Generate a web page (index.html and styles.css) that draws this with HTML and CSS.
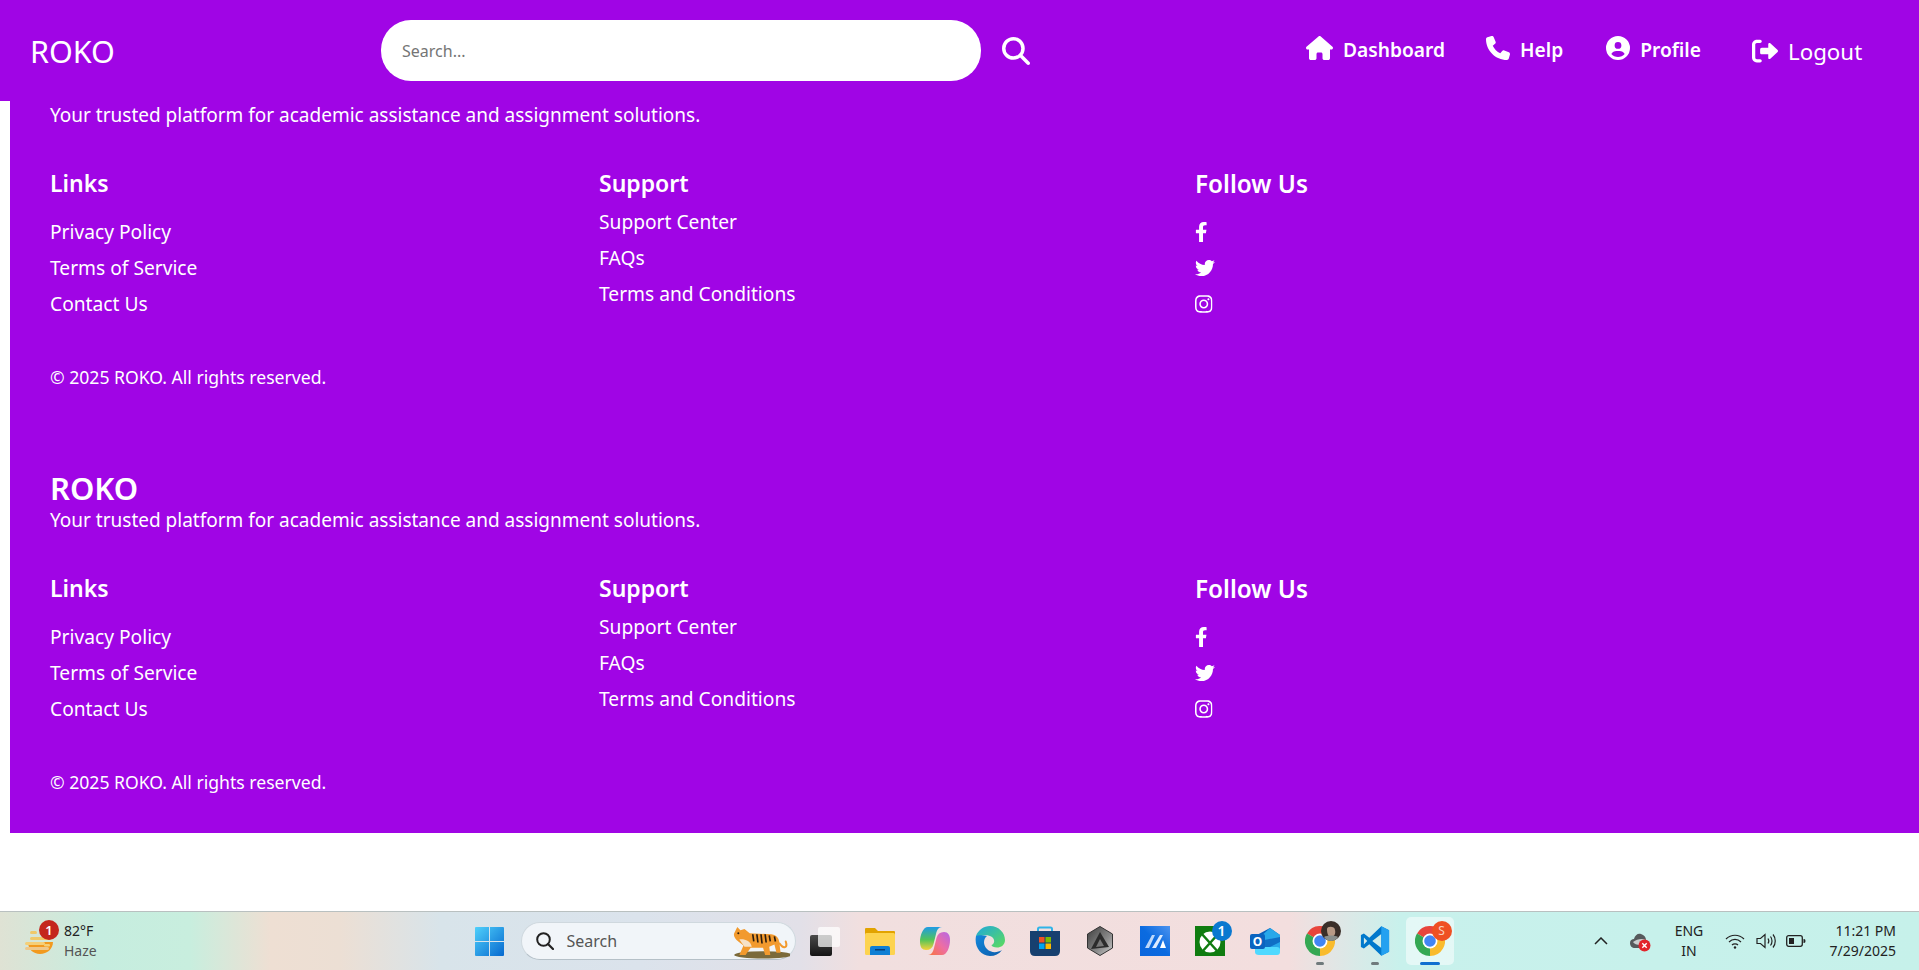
FILE: index.html
```html
<!DOCTYPE html>
<html lang="en">
<head>
    <meta charset="UTF-8">
    <meta name="viewport" content="width=device-width, initial-scale=1.0">
    <title>ROKO</title>
    <link rel="stylesheet" href="styles.css">
</head>
<body>
    <svg class="sprite">
        <symbol id="fb" viewBox="0 0 320 512"><path d="M279.140 288l14.220-92.660h-88.910v-60.130c0-25.350 12.420-50.060 52.240-50.060h40.420V6.260S260.430 0 225.360 0c-73.220 0-121.080 44.380-121.080 124.720v70.620H22.890V288h81.390v224h100.170V288z"/></symbol>
        <symbol id="tw" viewBox="0 0 512 512"><path d="M459.370 151.716c.325 4.548.325 9.097.325 13.645 0 138.720-105.583 298.558-298.558 298.558-59.452 0-114.680-17.219-161.137-47.106 8.447.974 16.568 1.299 25.340 1.299 49.055 0 94.213-16.568 130.274-44.832-46.132-.975-84.792-31.188-98.112-72.772 6.498.974 12.995 1.624 19.818 1.624 9.421 0 18.843-1.300 27.614-3.573-48.081-9.747-84.143-51.980-84.143-102.985v-1.299c13.969 7.797 30.214 12.670 47.431 13.319-28.264-18.843-46.781-51.005-46.781-87.391 0-19.492 5.197-37.360 14.294-52.954 51.655 63.675 129.300 105.258 216.365 109.807-1.624-7.797-2.599-15.918-2.599-24.040 0-57.828 46.782-104.934 104.934-104.934 30.213 0 57.502 12.670 76.670 33.137 23.715-4.548 46.456-13.320 66.599-25.340-7.798 24.366-24.366 44.833-46.132 57.827 21.117-2.273 41.584-8.122 60.426-16.243-14.292 20.791-32.161 39.308-52.628 54.253z"/></symbol>
        <symbol id="ig" viewBox="0 0 448 512"><path d="M224.100 141c-63.600 0-114.900 51.300-114.900 114.900s51.300 114.900 114.900 114.900S339 319.500 339 255.900 287.700 141 224.100 141zm0 189.600c-41.100 0-74.700-33.500-74.700-74.700s33.500-74.700 74.700-74.700 74.700 33.500 74.700 74.700-33.600 74.700-74.700 74.700zm146.400-194.300c0 14.900-12 26.800-26.800 26.800-14.900 0-26.800-12-26.800-26.800s12-26.800 26.800-26.800 26.800 12 26.800 26.800zm76.100 27.200c-1.700-35.900-9.900-67.700-36.200-93.900-26.200-26.200-58-34.400-93.900-36.200-37-2.100-147.900-2.100-184.900 0-35.800 1.700-67.600 9.900-93.900 36.100s-34.400 58-36.200 93.900c-2.100 37-2.100 147.900 0 184.900 1.700 35.900 9.900 67.700 36.200 93.900s58 34.400 93.900 36.200c37 2.100 147.900 2.100 184.900 0 35.900-1.700 67.700-9.900 93.900-36.200 26.200-26.200 34.400-58 36.200-93.900 2.100-37 2.100-147.800 0-184.800zM398.800 388c-7.800 19.600-22.900 34.700-42.600 42.600-29.500 11.700-99.500 9-132.100 9s-102.700 2.600-132.100-9c-19.600-7.800-34.700-22.900-42.600-42.600-11.700-29.500-9-99.500-9-132.100s-2.600-102.700 9-132.100c7.800-19.600 22.900-34.700 42.600-42.600 29.500-11.700 99.500-9 132.100-9s102.700-2.600 132.100 9c19.600 7.800 34.700 22.900 42.600 42.600 11.700 29.500 9 99.500 9 132.100s2.700 102.700-9 132.100z"/></symbol>
        <symbol id="chrome" viewBox="0 0 30 30">
            <path fill="#e8453c" d="M15 15L2 7.500A15 15 0 0 1 28 7.500Z"/>
            <path fill="#f9bb2d" d="M15 15L28 7.500A15 15 0 0 1 15 30Z"/>
            <path fill="#34a853" d="M15 15L15 30A15 15 0 0 1 2 7.500Z"/>
            <circle cx="15" cy="15" r="7.500" fill="#fff"/>
            <circle cx="15" cy="15" r="5.800" fill="#4285f4"/>
        </symbol>
    </svg>

    <div class="page">
        <header class="navbar">
            <a class="brand">ROKO</a>
            <form class="search">
                <input type="text" placeholder="Search...">
                <svg class="search_icon" viewBox="0 0 512 512"><path d="M416 208c0 45.900-14.900 88.300-40 122.700L502.600 457.400c12.500 12.500 12.500 32.800 0 45.300s-32.800 12.500-45.300 0L330.700 376c-34.400 25.200-76.800 40-122.700 40C93.100 416 0 322.900 0 208S93.100 0 208 0S416 93.100 416 208zM208 352a144 144 0 1 0 0-288 144 144 0 1 0 0 288z"/></svg>
            </form>
            <nav class="nav_links">
                <a><svg class="icon_home" viewBox="0 0 576 512"><path d="M575.800 255.500c0 18-15 32.100-32 32.100h-32l.7 160.200c0 2.700-.2 5.400-.5 8.100V472c0 22.100-17.900 40-40 40H456c-1.100 0-2.200 0-3.300-.1c-1.400 .1-2.800 .1-4.200 .1H416 392c-22.100 0-40-17.900-40-40V448 384c0-17.700-14.300-32-32-32H256c-17.700 0-32 14.300-32 32v64 24c0 22.100-17.900 40-40 40H160 128.100c-1.500 0-3-.1-4.500-.2c-1.200 .1-2.400 .2-3.600 .2H104c-22.100 0-40-17.900-40-40V360c0-.9 0-1.900 .1-2.800V287.600H32c-18 0-32-14-32-32.100c0-9 3-17 10-24L266.400 8c7-7 15-8 22-8s15 2 21 7L564.800 231.500c8 7 12 15 11 24z"/></svg><span>Dashboard</span></a>
                <a class="nav_help"><svg class="icon_round" viewBox="0 0 512 512"><path d="M164.900 24.600c-7.700-18.600-28-28.500-47.400-23.200l-88 24C12.100 30.200 0 46 0 64C0 311.400 200.600 512 448 512c18 0 33.800-12.100 38.600-29.500l24-88c5.300-19.400-4.600-39.700-23.200-47.400l-96-40c-16.300-6.800-35.200-2.100-46.300 11.600L304.700 368C234.300 334.700 177.300 277.700 144 207.300L193.300 167c13.700-11.200 18.400-30 11.600-46.300l-40-96z"/></svg><span>Help</span></a>
                <a><svg class="icon_round" viewBox="0 0 512 512"><path d="M399 384.200C376.900 345.800 335.400 320 288 320H224c-47.400 0-88.900 25.800-111 64.200c35.200 39.200 86.200 63.800 143 63.800s107.800-24.700 143-63.800zM0 256a256 256 0 1 1 512 0A256 256 0 1 1 0 256zm256 16a72 72 0 1 0 0-144 72 72 0 1 0 0 144z"/></svg><span>Profile</span></a>
                <a class="nav_logout"><svg class="icon_logout" viewBox="0 0 512 512"><path d="M160 96c17.700 0 32-14.300 32-32s-14.300-32-32-32H96C43 32 0 75 0 128V384c0 53 43 96 96 96h64c17.700 0 32-14.300 32-32s-14.300-32-32-32H96c-17.700 0-32-14.300-32-32V128c0-17.700 14.300-32 32-32h64zM504.500 273.400c4.800-4.500 7.500-10.800 7.500-17.400s-2.700-12.900-7.500-17.400l-144-136c-7-6.600-17.200-8.400-26-4.600s-14.500 12.500-14.500 22v72H192c-17.700 0-32 14.300-32 32v64c0 17.700 14.300 32 32 32h128v72c0 9.600 5.700 18.200 14.500 22s19 2 26-4.600l144-136z"/></svg>Logout</a>
            </nav>
        </header>

        <main class="footers">
            <footer class="site_footer first">
                <p class="tagline">Your trusted platform for academic assistance and assignment solutions.</p>
                <div class="columns">
                    <div class="col col_links">
                        <h3>Links</h3>
                        <ul>
                            <li>Privacy Policy</li>
                            <li>Terms of Service</li>
                            <li>Contact Us</li>
                        </ul>
                    </div>
                    <div class="col col_support">
                        <h3>Support</h3>
                        <ul>
                            <li>Support Center</li>
                            <li>FAQs</li>
                            <li>Terms and Conditions</li>
                        </ul>
                    </div>
                    <div class="col col_follow">
                        <h3>Follow Us</h3>
                        <ul>
                            <li><svg class="fb"><use href="#fb"/></svg></li>
                            <li><svg class="tw"><use href="#tw"/></svg></li>
                            <li><svg class="ig"><use href="#ig"/></svg></li>
                        </ul>
                    </div>
                </div>
                <p class="copyright">© 2025 ROKO. All rights reserved.</p>
            </footer>

            <footer class="site_footer second">
                <h2>ROKO</h2>
                <p class="tagline">Your trusted platform for academic assistance and assignment solutions.</p>
                <div class="columns">
                    <div class="col col_links">
                        <h3>Links</h3>
                        <ul>
                            <li>Privacy Policy</li>
                            <li>Terms of Service</li>
                            <li>Contact Us</li>
                        </ul>
                    </div>
                    <div class="col col_support">
                        <h3>Support</h3>
                        <ul>
                            <li>Support Center</li>
                            <li>FAQs</li>
                            <li>Terms and Conditions</li>
                        </ul>
                    </div>
                    <div class="col col_follow">
                        <h3>Follow Us</h3>
                        <ul>
                            <li><svg class="fb"><use href="#fb"/></svg></li>
                            <li><svg class="tw"><use href="#tw"/></svg></li>
                            <li><svg class="ig"><use href="#ig"/></svg></li>
                        </ul>
                    </div>
                </div>
                <p class="copyright">© 2025 ROKO. All rights reserved.</p>
            </footer>
        </main>

        <div class="taskbar">
            <div class="tb_weather">
                <div class="weather_icon">
                    <svg viewBox="0 0 29 23" width="29" height="23">
                        <path fill="#f29a1f" d="M3 11H28C28 18 22 23 15 23C8 23 3 18 3 11Z"/>
                        <rect x="5" y="0" width="7" height="3" rx="1.500" fill="#f0c96a"/>
                        <rect x="5" y="6" width="21" height="3" rx="1.500" fill="#f0c96a"/>
                        <rect x="0" y="11" width="20" height="3" rx="1.500" fill="#f5cf78"/>
                        <rect x="19" y="13" width="6" height="2.500" rx="1.200" fill="#f5cf78"/>
                        <rect x="0" y="16" width="24" height="3" rx="1.500" fill="#eec88c"/>
                    </svg>
                    <span class="weather_badge">1</span>
                </div>
                <div class="weather_text">
                    <span class="temp">82°F</span>
                    <span class="haze">Haze</span>
                </div>
            </div>

            <div class="tb_slot">
                <svg viewBox="0 0 29 29" width="29" height="29">
                    <defs><linearGradient id="winblue" x1="0" y1="0" x2="1" y2="1"><stop offset="0" stop-color="#4fd0fb"/><stop offset="1" stop-color="#0669cf"/></linearGradient></defs>
                    <path fill="url(#winblue)" d="M1 0H14V14H0V1Q0 0 1 0ZM15 0H28Q29 0 29 1V14H15ZM0 15H14V29H1Q0 29 0 28ZM15 15H29V28Q29 29 28 29H15Z"/>
                </svg>
            </div>

            <div class="tb_search">
                <svg class="tb_search_icon" viewBox="0 0 18 18" width="18" height="18"><circle cx="7.500" cy="7.500" r="6.300" fill="none" stroke="#222" stroke-width="2"/><path d="M12 12L17 17" stroke="#222" stroke-width="2.200" stroke-linecap="round"/></svg>
                <span>Search</span>
                <svg class="tiger" viewBox="0 0 56 32" width="58" height="33">
                    <ellipse cx="30" cy="28" rx="28" ry="3.500" fill="#7b6a3a"/>
                    <path fill="#f29a2e" d="M2 7L5 1L8 4L12 3L17 7L38 8C44 9 46 13 46 18L47 26H43L41 18L36 20L37 28H32L30 21H18L13 28H7L11 19L6 15C3 13 1 10 2 7Z"/>
                    <path fill="#f6e2c8" d="M7 13C11 12 18 14 19 20H12Z"/>
                    <path stroke="#2b1d10" stroke-width="1.600" fill="none" d="M20 8L21 15M24 8L25 16M28 8L29 17M32 8L33 16M36 9L37 15M41 10L42 15"/>
                    <path stroke="#f29a2e" stroke-width="2" fill="none" stroke-linecap="round" d="M46 17C50 23 54 21 52 15"/>
                    <circle cx="6" cy="7" r="1" fill="#2b1d10"/>
                </svg>
            </div>

            <div class="tb_slot">
                <svg viewBox="0 0 30 29" width="30" height="29">
                    <defs><linearGradient id="tvdark" x1="0" y1="0" x2="0" y2="1"><stop offset="0" stop-color="#4a4a4a"/><stop offset="1" stop-color="#141414"/></linearGradient></defs>
                    <rect x="0" y="8" width="22" height="21" rx="2" fill="url(#tvdark)"/>
                    <rect x="8" y="0" width="22" height="20" rx="2" fill="#fff" opacity=".72"/>
                </svg>
            </div>
            <div class="tb_slot">
                <svg viewBox="0 0 30 27" width="30" height="27">
                    <path fill="#e2a300" d="M1 0H10L13 3H29Q30 3 30 4V8H0V1Q0 0 1 0Z"/>
                    <rect x="0" y="5" width="30" height="22" rx="1.500" fill="#fdd34f"/>
                    <path fill="#0f7fd4" d="M5 20Q5 18 7 18H23Q25 18 25 20V27H5Z"/>
                    <rect x="10" y="21" width="10" height="1.500" fill="#073f78"/>
                </svg>
            </div>
            <div class="tb_slot">
                <svg viewBox="0 0 30 30" width="30" height="30">
                    <defs>
                        <linearGradient id="copL" x1="0" y1="0" x2="0" y2="1"><stop offset="0" stop-color="#1f9be6"/><stop offset=".55" stop-color="#52c45a"/><stop offset="1" stop-color="#f6d23a"/></linearGradient>
                        <linearGradient id="copR" x1="1" y1="0" x2="0" y2="1"><stop offset="0" stop-color="#b565e6"/><stop offset=".5" stop-color="#ee6ea2"/><stop offset="1" stop-color="#f8753a"/></linearGradient>
                    </defs>
                    <path fill="url(#copL)" d="M8 1H22C18.500 1 17 4 16 8L13.500 18C12.500 22 10 24 6 24C2 24 0 21 0 16C0 9 3 1 8 1Z"/>
                    <path fill="url(#copR)" d="M22 29H8C11.500 29 13 26 14 22L16.500 12C17.500 8 20 6 24 6C28 6 30 9 30 14C30 21 27 29 22 29Z"/>
                </svg>
            </div>
            <div class="tb_slot">
                <svg viewBox="0 0 30 30" width="30" height="30">
                    <defs>
                        <linearGradient id="edgeG" x1="0" y1="0" x2="1" y2="1"><stop offset="0" stop-color="#1fa8dc"/><stop offset="1" stop-color="#5ddc5a"/></linearGradient>
                        <linearGradient id="edgeB" x1="0" y1="0" x2="1" y2="1"><stop offset="0" stop-color="#1488dc"/><stop offset="1" stop-color="#0d5cab"/></linearGradient>
                    </defs>
                    <path fill="url(#edgeG)" d="M1 10C3 4 9 0 15 0C24 0 30 7 30 14C30 19 26 21.500 22 21.500C19 21.500 16.500 20.500 16.500 19C20 18 20 13 17 11C12 8 4 9 1 15Z"/>
                    <path fill="url(#edgeB)" d="M1 10C-1 20 5 30 15 30C20 30 24 28 27 24C22 27 16 27 12 23C8 19 8 13 12 10C8 9 3 9 1 10Z"/>
                </svg>
            </div>
            <div class="tb_slot">
                <svg viewBox="0 0 30 30" width="30" height="30">
                    <path fill="none" stroke="#2fb4e8" stroke-width="2" d="M8 8V3Q8 1.500 9.500 1.500H20.500Q22 1.500 22 3V8"/>
                    <path fill="#17406f" d="M0 5H30V25Q30 30 25 30H5Q0 30 0 25Z"/>
                    <rect x="9" y="11" width="5.500" height="5.500" fill="#f25022"/>
                    <rect x="15.500" y="11" width="5.500" height="5.500" fill="#7fba00"/>
                    <rect x="9" y="17.500" width="5.500" height="5.500" fill="#00a4ef"/>
                    <rect x="15.500" y="17.500" width="5.500" height="5.500" fill="#ffb900"/>
                </svg>
            </div>
            <div class="tb_slot">
                <svg viewBox="0 0 26 30" width="26" height="30">
                    <defs><linearGradient id="hexG" x1="0" y1="0" x2="1" y2="1"><stop offset="0" stop-color="#3c3c3c"/><stop offset=".6" stop-color="#8a8a8a"/><stop offset="1" stop-color="#cfcfcf"/></linearGradient></defs>
                    <path fill="url(#hexG)" stroke="#333" stroke-width="1" d="M13 .5L25.500 8V22L13 29.500L.5 22V8Z"/>
                    <path fill="#2b2b2b" d="M13 6L22 21L4 23Z"/>
                    <path fill="#777" d="M13 13L17 20L9 21Z"/>
                </svg>
            </div>
            <div class="tb_slot">
                <svg viewBox="0 0 30 30" width="30" height="30">
                    <defs><linearGradient id="mBlue" x1="1" y1="0" x2="0" y2="1"><stop offset="0" stop-color="#4d94ef"/><stop offset=".5" stop-color="#0b6be0"/><stop offset="1" stop-color="#0a66dd"/></linearGradient></defs>
                    <rect width="30" height="30" fill="url(#mBlue)"/>
                    <path fill="#bcd8fa" d="M5 22L12 9H15L9 22Z"/>
                    <path fill="#dcebff" d="M12 22L20 9H23L16 22Z"/>
                    <path fill="#fff" d="M20 22L23 14L26 22Z"/>
                </svg>
            </div>
            <div class="tb_slot">
                <svg viewBox="0 0 30 30" width="30" height="30">
                    <rect width="30" height="30" fill="#107c10"/>
                    <circle cx="15" cy="16" r="10.500" fill="#fff"/>
                    <path stroke="#107c10" stroke-width="2.500" fill="none" d="M6 7L24 27M24 7L6 27"/>
                </svg>
                <span class="slot_badge xbox_badge">1</span>
            </div>
            <div class="tb_slot">
                <div class="outlook">
                    <svg viewBox="0 0 30 27" width="30" height="27">
                        <path fill="#0a5fb8" d="M5 8L20 0L30 7V12H5Z"/>
                        <path fill="#28a8ea" d="M20 0L30 7V22H9V10Z"/>
                        <path fill="#0f6fc6" d="M9 13L30 9V14L14 22H9Z"/>
                        <path fill="#50d9ff" d="M5 19H27Q30 19 30 22V24Q30 27 27 27H9Q5 27 5 24Z"/>
                    </svg>
                    <span class="outlook_o">O</span>
                </div>
            </div>
            <div class="tb_slot">
                <svg class="chrome"><use href="#chrome"/></svg>
                <svg class="avatar" viewBox="0 0 20 20" width="20" height="20">
                    <circle cx="10" cy="10" r="10" fill="#3a2e28"/>
                    <path fill="#b89a86" d="M6 8C6 5 14 5 14 9C15 13 13 16 10 16C7 16 6 12 6 8Z"/>
                    <path fill="#8a8f8c" d="M3 16C6 14 14 14 17 16C15 19 12 20 10 20C8 20 5 19 3 16Z"/>
                </svg>
                <span class="run_dot"></span>
            </div>
            <div class="tb_slot">
                <svg viewBox="0 0 100 100" width="30" height="30">
                    <path fill="#0078cc" fill-rule="evenodd" d="M71 1L97 14V86L71 99L31 61L13 75L3 70V30L13 25L31 39ZM71 27L41 50L71 73ZM13 38V62L24 50Z"/>
                    <path fill="#24a1f0" d="M71 1L97 14V86L71 99V73V27Z"/>
                </svg>
                <span class="run_dot"></span>
            </div>
            <div class="tb_slot active">
                <svg class="chrome"><use href="#chrome"/></svg>
                <span class="slot_badge s_badge">S</span>
                <span class="run_pill"></span>
            </div>

            <div class="tray">
                <div class="tray_item chev"><svg viewBox="0 0 14 8" width="14" height="8"><path d="M1 7L7 1L13 7" fill="none" stroke="#222" stroke-width="1.500"/></svg></div>
                <div class="tray_item cloud">
                    <svg viewBox="0 0 21 21" width="21" height="21">
                        <path fill="#565a5c" d="M5 17C2 17 0 15 0 12C0 9 2 8 4 8C5 4 8 2 11 3C14 4 16 6 16 9C19 10 20 12 19 15C18 17 17 17 15 17Z"/>
                        <path fill="#c9cdcd" d="M3 11C7 8 12 7 16 9C17 11 14 14 10 14C7 14 4 13 3 11Z"/>
                        <circle cx="14.500" cy="14.500" r="6" fill="#e2252b"/>
                        <path stroke="#fff" stroke-width="1.400" d="M12.300 12.300L16.700 16.700M16.700 12.300L12.300 16.700"/>
                    </svg>
                </div>
                <div class="tray_item lang"><span>ENG</span><span>IN</span></div>
                <div class="tray_item wifi">
                    <svg viewBox="0 0 20 16" width="20" height="16" fill="none" stroke="#222" stroke-width="1.200">
                        <path d="M1 6C6 1 14 1 19 6"/><path d="M4 9C7.500 5.500 12.500 5.500 16 9"/><path d="M7 12C8.500 10.500 11.500 10.500 13 12"/>
                        <circle cx="10" cy="14.500" r="1.200" fill="#222" stroke="none"/>
                    </svg>
                </div>
                <div class="tray_item speaker">
                    <svg viewBox="0 0 21 16" width="21" height="16" fill="none" stroke="#222" stroke-width="1.200">
                        <path d="M1 5.500H4.500L9 1.500V14.500L4.500 10.500H1Z"/><path d="M12 5.500C13 7 13 9 12 10.500"/><path d="M14.500 3.500C16.500 6 16.500 10 14.500 12.500"/><path d="M17 1.500C20 5 20 11 17 14.500"/>
                    </svg>
                </div>
                <div class="tray_item battery">
                    <svg viewBox="0 0 20 12" width="20" height="12">
                        <rect x=".7" y=".7" width="15.600" height="10.600" rx="2" fill="none" stroke="#222" stroke-width="1.300"/>
                        <rect x="3" y="3" width="5" height="6" fill="#222"/>
                        <path d="M17.500 4H18Q19.500 4 19.500 6Q19.500 8 18 8H17.500Z" fill="#222"/>
                    </svg>
                </div>
                <div class="tray_item clock"><span>11:21 PM</span><span>7/29/2025</span></div>
            </div>
        </div>
    </div>
</body>
</html>
```

FILE: styles.css
```css
*{
    margin: 0;
    padding: 0;
    box-sizing: border-box;
}

body{
    background-color: #fff;
    font-family: "Noto Sans", sans-serif;
    color: #fff;
    overflow: hidden;
}

.sprite{
    display: none;
}

.page{
    height: 970px;
    display: flex;
    flex-direction: column;
}

/* top bar */
.navbar{
    height: 101px;
    background-color: #a005e5;
    display: flex;
    align-items: center;
    padding-left: 30px;
}

.brand{
    width: 351px;
    font-size: 30.5px;
}

.search{
    display: flex;
    align-items: center;
}

.search input{
    width: 600px;
    height: 61px;
    border: none;
    border-radius: 30px;
    padding-left: 21px;
    font-family: inherit;
    font-size: 16px;
}

.search_icon{
    width: 28px;
    height: 28px;
    margin-left: 21px;
    fill: #fff;
}

.nav_links{
    display: flex;
    align-items: center;
    margin-left: 276px;
    padding-bottom: 6px;
    font-size: 19.2px;
    font-weight: 600;
}

.nav_links a{
    display: flex;
    align-items: center;
    gap: 10px;
    margin-right: 41px;
}

.nav_links .nav_help{
    margin-right: 43px;
}

.nav_links span{
    padding-top: 3px;
}

.nav_links svg{
    fill: #fff;
}

.icon_home{
    width: 27px;
    height: 24px;
}

.icon_round{
    width: 24px;
    height: 24px;
}

.icon_logout{
    width: 26px;
    height: 26px;
}

.nav_links .nav_logout{
    font-size: 22.3px;
    font-weight: 400;
    margin-left: 10px;
    margin-top: 7px;
}

/* footers */
.footers{
    flex: 1;
    padding-left: 10px;
}

.site_footer{
    background-color: #a005e5;
    padding: 0 40px;
}

.site_footer.first{
    height: 328px;
    padding-top: 1px;
}

.site_footer.second{
    height: 404px;
    padding-top: 40px;
}

.site_footer h2{
    font-size: 31px;
    font-weight: 600;
    line-height: 38px;
}

.tagline{
    font-size: 19px;
}

.columns{
    display: flex;
    margin-top: 39px;
}

.col h3{
    font-size: 23px;
    font-weight: 600;
}

.col ul{
    margin-top: 14px;
}

.col li{
    list-style: none;
    font-size: 19.2px;
    height: 36px;
    display: flex;
    align-items: center;
}

.col_links{
    width: 549px;
}

.col_support{
    width: 596px;
}

.col_support ul{
    margin-top: 4px;
}

.col_follow h3{
    font-size: 24.3px;
}

.col svg{
    height: 20px;
    fill: #fff;
}

.col .fb{
    width: 12.500px;
}

.col .tw{
    width: 20px;
}

.col .ig{
    width: 17.500px;
}

.copyright{
    margin-top: 43px;
    font-size: 17.6px;
}

/* windows taskbar */
.taskbar{
    height: 59px;
    display: flex;
    align-items: center;
    color: #222;
    border-top: 1px solid #b9c0c0;
    background: linear-gradient(90deg, #dfe2d4 0, #c6eddf 100px, #c8eede 190px, #eedfd3 270px, #ecdfd4 340px, #d8e4ea 440px, #dbe3ec 640px, #e2e0e8 800px, #f1dfdf 860px, #f3dede 1290px, #dfe7e6 1340px, #c8f1ec 1400px, #c6f1ea 1919px);
}

.tb_weather{
    width: 461.500px;
    padding-left: 25px;
    display: flex;
    align-items: center;
    gap: 10px;
}

.weather_icon{
    position: relative;
    width: 29px;
    height: 23px;
    margin-top: 3px;
}

.weather_badge{
    position: absolute;
    left: 14px;
    top: -11px;
    width: 20px;
    height: 20px;
    border-radius: 50%;
    background-color: #c4261d;
    color: #fff;
    font-size: 13px;
    font-weight: 600;
    text-align: center;
    line-height: 20px;
}

.weather_text{
    display: flex;
    flex-direction: column;
    font-size: 14px;
    line-height: 20px;
}

.haze{
    color: #555;
}

.tb_slot{
    position: relative;
    width: 55px;
    height: 58px;
    flex-shrink: 0;
    display: flex;
    align-items: center;
    justify-content: center;
}

.tb_search{
    width: 275px;
    height: 38px;
    margin: 0 2px 0 4px;
    padding-left: 14px;
    display: flex;
    align-items: center;
    gap: 13px;
    position: relative;
    background-color: #f1f5f9;
    border: 1px solid #cfd8de;
    border-bottom-color: #b5c0c8;
    border-radius: 19px;
    font-size: 16px;
    color: #555;
}

.tiger{
    position: absolute;
    right: 5px;
    top: 3px;
}

.slot_badge{
    position: absolute;
    width: 20px;
    height: 20px;
    top: 9px;
    left: 29px;
    border-radius: 50%;
    color: #fff;
    text-align: center;
    line-height: 20px;
}

.xbox_badge{
    background-color: #0a78d0;
    font-size: 14px;
    font-weight: 600;
}

.s_badge{
    background-color: #ef5023;
    font-size: 12px;
    color: #f8d0c0;
}

.chrome{
    width: 30px;
    height: 30px;
}

.avatar{
    position: absolute;
    top: 9px;
    left: 28px;
}

.outlook{
    position: relative;
    width: 30px;
    height: 27px;
}

.outlook_o{
    position: absolute;
    left: 0;
    top: 6px;
    width: 15px;
    height: 15px;
    border-radius: 2px;
    background-color: #0a64c0;
    color: #fff;
    font-size: 12px;
    font-weight: 700;
    text-align: center;
    line-height: 15px;
}

.run_dot{
    position: absolute;
    left: 23.500px;
    top: 50px;
    width: 8px;
    height: 3px;
    border-radius: 2px;
    background-color: #6f7a7c;
}

.active::before{
    content: "";
    position: absolute;
    left: 3.500px;
    top: 5px;
    width: 48px;
    height: 48px;
    border-radius: 5px;
    background-color: rgba(255, 255, 255, .5);
}

.active svg{
    position: relative;
}

.run_pill{
    position: absolute;
    left: 17.500px;
    top: 50px;
    width: 20px;
    height: 3px;
    border-radius: 2px;
    background-color: #0f6fd0;
}

.tray{
    margin-left: auto;
    margin-right: 23px;
    display: flex;
    align-items: center;
    font-size: 14px;
    line-height: 20px;
}

.tray_item{
    display: flex;
    align-items: center;
    justify-content: center;
}

.chev{
    width: 40px;
}

.cloud{
    width: 38px;
}

.lang{
    width: 60px;
    flex-direction: column;
}

.wifi{
    width: 32px;
}

.speaker{
    width: 30px;
}

.battery{
    width: 30px;
}

.clock{
    width: 85px;
    flex-direction: column;
    align-items: flex-end;
}
```
